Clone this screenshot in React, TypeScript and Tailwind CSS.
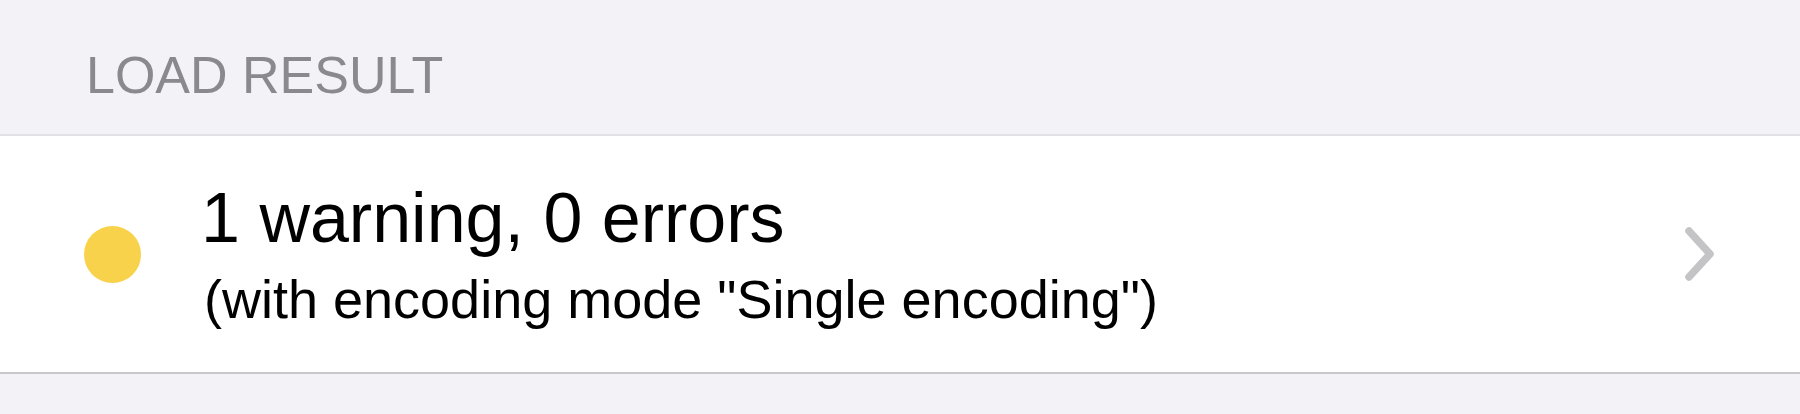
export default function App() {
  return (
    <div
      className="w-[1800px] h-[414px] bg-[#f2f2f7] overflow-hidden"
      style={{ fontFamily: '"Liberation Sans", Arial, sans-serif' }}
    >
      {/* Section header */}
      <div className="h-[134px] pt-[49px] pl-[86px]">
        <h2 className="text-[52px] leading-[52px] font-normal text-[#8a8a8e]">LOAD RESULT</h2>
      </div>

      {/* Cell */}
      <div className="h-[240px] bg-white border-t-2 border-b-2 border-t-[#e1e1e6] border-b-[#c8c7cc] flex items-center pl-[84px] pr-[84px]">
        <span className="w-[57px] h-[57px] rounded-full bg-[#f9d24b] shrink-0" />
        <div className="flex-1 ml-[60px] flex flex-col gap-[19px]">
          <div className="text-[70px] leading-[70px] text-black">1 warning, 0 errors</div>
          <div className="text-[54px] leading-[54px] text-black pl-[3px]">
            (with encoding mode "Single encoding")
          </div>
        </div>
        <svg width="34" height="56" viewBox="0 0 34 56" fill="none" className="shrink-0">
          <path
            d="M7 5 L28 28 L7 51"
            stroke="#c4c4c7"
            strokeWidth="7.5"
            strokeLinecap="round"
            strokeLinejoin="round"
          />
        </svg>
      </div>
    </div>
  );
}
